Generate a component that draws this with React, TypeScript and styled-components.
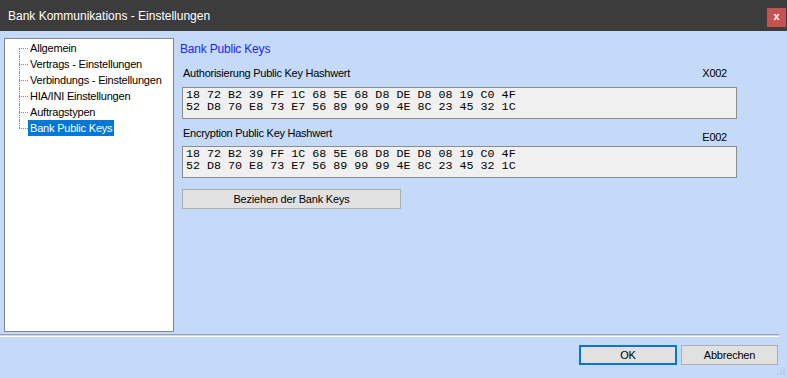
import styled, { createGlobalStyle } from 'styled-components';

const GlobalStyle = createGlobalStyle`
  html, body {
    margin: 0;
    padding: 0;
    background: #c4daf8;
  }
  * {
    box-sizing: border-box;
  }
`;

const Window = styled.div`
  width: 787px;
  height: 378px;
  display: flex;
  flex-direction: column;
  background: #c4daf8;
  font-family: 'Liberation Sans', Arial, sans-serif;
  color: #000;
  overflow: hidden;
`;

const TitleBar = styled.div`
  height: 31px;
  flex-shrink: 0;
  background: #3c3c3c;
  display: flex;
  align-items: center;
  justify-content: space-between;
  padding: 0 1px 0 8px;
`;

const Title = styled.span`
  color: #fff;
  font-size: 12px;
`;

const CloseButton = styled.button`
  width: 19px;
  height: 19px;
  margin-top: 4px;
  border: none;
  background: #c75050;
  color: #fff;
  font: bold 11px 'Liberation Sans', Arial, sans-serif;
  padding: 0 0 2px;
  line-height: 1;
`;

const Main = styled.div`
  display: flex;
  padding: 7px 0 0 4px;
  height: 301px;
  flex-shrink: 0;
`;

const TreePanel = styled.div`
  width: 170px;
  height: 294px;
  background: #fff;
  border: 1px solid #828790;
  padding-top: 1px;
`;

const TreeRow = styled.div<{ $pos: 'first' | 'mid' | 'last' }>`
  position: relative;
  height: 16px;
  display: flex;
  align-items: center;
  padding-left: 14px;
  font-size: 11px;
  letter-spacing: -0.2px;

  &::before {
    content: '';
    position: absolute;
    left: 14px;
    top: ${({ $pos }) => ($pos === 'first' ? '8px' : '0')};
    bottom: ${({ $pos }) => ($pos === 'last' ? '8px' : '0')};
    border-left: 1px dotted #8a8a8a;
  }
`;

const Connector = styled.span`
  width: 9px;
  border-top: 1px dotted #8a8a8a;
  flex-shrink: 0;
`;

const TreeLabel = styled.span<{ $selected?: boolean }>`
  padding: 0 2px;
  height: 16px;
  line-height: 16px;
  background: ${({ $selected }) => ($selected ? '#0078d7' : 'transparent')};
  color: ${({ $selected }) => ($selected ? '#fff' : '#000')};
`;

const Content = styled.div`
  flex: 1;
  display: flex;
  flex-direction: column;
  align-items: flex-start;
  padding: 3px 50px 0 6px;
`;

const SectionTitle = styled.div`
  color: #1f1fff;
  font-size: 12px;
  letter-spacing: -0.2px;
  height: 16px;
  line-height: 16px;
  margin-bottom: 9px;
`;

const Field = styled.div<{ $boxGap: number }>`
  align-self: stretch;
  display: flex;
  flex-direction: column;
  gap: ${({ $boxGap }) => $boxGap}px;
  margin-bottom: 7px;
`;

const FieldHeader = styled.div`
  display: flex;
  justify-content: space-between;
  align-items: flex-start;
  font-size: 11px;
  letter-spacing: -0.25px;
  height: 14px;
  line-height: 14px;
  padding: 0 10px 0 3px;
`;

const Code = styled.span<{ $offset: number }>`
  margin-top: ${({ $offset }) => $offset}px;
`;

const HashBox = styled.div`
  margin-left: 2px;
  height: 32px;
  background: #f0f0f0;
  border: 1px solid #8c8c8c;
  padding: 1px 3px;
  font-family: 'Liberation Mono', 'DejaVu Sans Mono', monospace;
  font-size: 11.7px;
  line-height: 12px;
  white-space: pre;
`;

const Button = styled.button<{ $width: number; $primary?: boolean }>`
  width: ${({ $width }) => $width}px;
  height: 20px;
  background: #e1e1e1;
  border: ${({ $primary }) => ($primary ? '2px solid #0078d7' : '1px solid #adadad')};
  font-family: 'Liberation Sans', Arial, sans-serif;
  font-size: 11px;
  letter-spacing: -0.2px;
  color: #000;
  padding: 0;
`;

const FetchButton = styled(Button)`
  margin: 4px 0 0 2px;
`;

const Separator = styled.div`
  height: 3px;
  margin-top: 2px;
  border-top: 1px solid #a0a0a0;
  border-bottom: 1px solid #fff;
  margin-right: 8px;
`;

const Footer = styled.div`
  display: flex;
  justify-content: flex-end;
  gap: 4px;
  padding: 8px 9px 0 0;
  position: relative;
  flex: 1;
`;

const Grip = styled.svg`
  position: absolute;
  right: 2px;
  bottom: 2px;
`;

const hash = '18 72 B2 39 FF 1C 68 5E 68 D8 DE D8 08 19 C0 4F\n52 D8 70 E8 73 E7 56 89 99 99 4E 8C 23 45 32 1C';

const treeItems = [
  'Allgemein',
  'Vertrags - Einstellungen',
  'Verbindungs - Einstellungen',
  'HIA/INI Einstellungen',
  'Auftragstypen',
  'Bank Public Keys',
];

export default function App() {
  return (
    <>
      <GlobalStyle />
      <Window>
        <TitleBar>
          <Title>Bank Kommunikations - Einstellungen</Title>
          <CloseButton>x</CloseButton>
        </TitleBar>
        <Main>
          <TreePanel>
            {treeItems.map((item, i) => (
              <TreeRow
                key={item}
                $pos={i === 0 ? 'first' : i === treeItems.length - 1 ? 'last' : 'mid'}
              >
                <Connector />
                <TreeLabel $selected={i === treeItems.length - 1}>{item}</TreeLabel>
              </TreeRow>
            ))}
          </TreePanel>
          <Content>
            <SectionTitle>Bank Public Keys</SectionTitle>
            <Field $boxGap={7}>
              <FieldHeader>
                <span>Authorisierung Public Key Hashwert</span>
                <Code $offset={0}>X002</Code>
              </FieldHeader>
              <HashBox>{hash}</HashBox>
            </Field>
            <Field $boxGap={6}>
              <FieldHeader>
                <span>Encryption Public Key Hashwert</span>
                <Code $offset={4}>E002</Code>
              </FieldHeader>
              <HashBox>{hash}</HashBox>
            </Field>
            <FetchButton $width={219}>Beziehen der Bank Keys</FetchButton>
          </Content>
        </Main>
        <Separator />
        <Footer>
          <Button $width={98} $primary>
            OK
          </Button>
          <Button $width={97}>Abbrechen</Button>
          <Grip width="10" height="10" viewBox="0 0 10 10">
            {[
              [8, 0],
              [8, 3],
              [5, 3],
              [8, 6],
              [5, 6],
              [2, 6],
            ].map(([x, y]) => (
              <rect key={`${x}-${y}`} x={x} y={y + 1} width="2" height="2" fill="#b8c8de" />
            ))}
          </Grip>
        </Footer>
      </Window>
    </>
  );
}
